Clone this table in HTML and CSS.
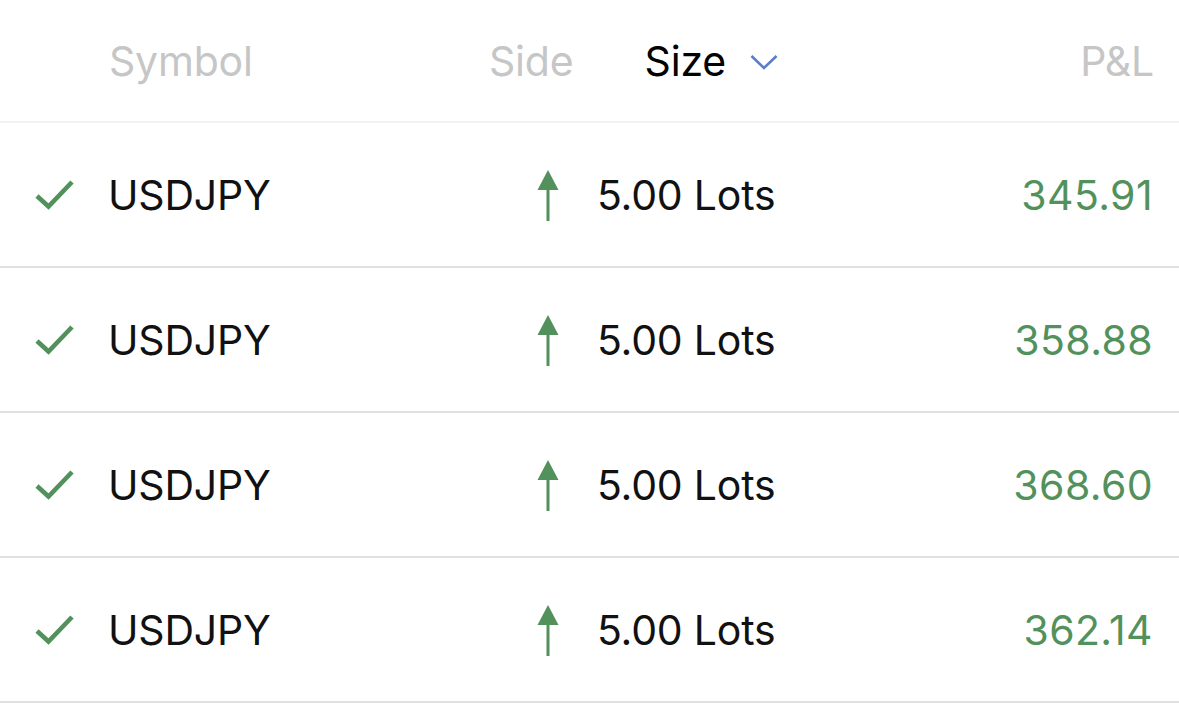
FILE: index.html
```html
<!DOCTYPE html>
<html lang="en">
<head>
    <meta charset="UTF-8" />
    <meta name="viewport" content="width=device-width, initial-scale=1.0" />
    <title>Positions</title>
    <link rel="stylesheet" href="styles.css">
</head>
<body>

<div class="positions">
    <!-- Column headers -->
    <div class="head">
        <div></div>
        <div class="h-symbol">Symbol</div>
        <div class="h-side">Side</div>
        <div class="h-size">
            Size
            <svg class="chevron" width="28" height="16" viewBox="0 0 28 16"><polyline points="1.5,2 14,14 26.5,2" fill="none" stroke="#5a7ec8" stroke-width="2.6"/></svg>
        </div>
        <div class="h-pnl">P&amp;L</div>
    </div>

    <div class="row">
        <div class="check"><svg width="40" height="30" viewBox="0 0 40 30"><polyline points="2,16 13.5,26.5 37,2" fill="none" stroke="#52915c" stroke-width="4.6"/></svg></div>
        <div class="symbol">USDJPY</div>
        <div class="side"><svg width="22" height="51" viewBox="0 0 22 51"><polygon points="11,0 0.5,20 21.5,20" fill="#52915c"/><rect x="9.5" y="18" width="3" height="33" fill="#52915c"/></svg></div>
        <div class="size">5.00 Lots</div>
        <div class="pnl">345.91</div>
    </div>
    <div class="row">
        <div class="check"><svg width="40" height="30" viewBox="0 0 40 30"><polyline points="2,16 13.5,26.5 37,2" fill="none" stroke="#52915c" stroke-width="4.6"/></svg></div>
        <div class="symbol">USDJPY</div>
        <div class="side"><svg width="22" height="51" viewBox="0 0 22 51"><polygon points="11,0 0.5,20 21.5,20" fill="#52915c"/><rect x="9.5" y="18" width="3" height="33" fill="#52915c"/></svg></div>
        <div class="size">5.00 Lots</div>
        <div class="pnl">358.88</div>
    </div>
    <div class="row">
        <div class="check"><svg width="40" height="30" viewBox="0 0 40 30"><polyline points="2,16 13.5,26.5 37,2" fill="none" stroke="#52915c" stroke-width="4.6"/></svg></div>
        <div class="symbol">USDJPY</div>
        <div class="side"><svg width="22" height="51" viewBox="0 0 22 51"><polygon points="11,0 0.5,20 21.5,20" fill="#52915c"/><rect x="9.5" y="18" width="3" height="33" fill="#52915c"/></svg></div>
        <div class="size">5.00 Lots</div>
        <div class="pnl">368.60</div>
    </div>
    <div class="row">
        <div class="check"><svg width="40" height="30" viewBox="0 0 40 30"><polyline points="2,16 13.5,26.5 37,2" fill="none" stroke="#52915c" stroke-width="4.6"/></svg></div>
        <div class="symbol">USDJPY</div>
        <div class="side"><svg width="22" height="51" viewBox="0 0 22 51"><polygon points="11,0 0.5,20 21.5,20" fill="#52915c"/><rect x="9.5" y="18" width="3" height="33" fill="#52915c"/></svg></div>
        <div class="size">5.00 Lots</div>
        <div class="pnl">362.14</div>
    </div>
</div>

</body>
</html>
```

FILE: styles.css
```css
body {
    margin: 0;
    background-color: #fff;
    font-family: Inter, "Noto Sans", sans-serif;
    font-size: 41px;
    letter-spacing: -0.2px;
    color: #111;
}
.positions {
    width: 1179px;
}
.head {
    display: grid;
    grid-template-columns: 109px 380px 83px 206px 1fr;
    align-items: center;
    height: 121px;
    padding-right: 25px;
    border-bottom: 2px solid #f2f2f2;
    color: #c6c6c6;
}
.h-size {
    display: flex;
    align-items: center;
    justify-content: flex-end;
    gap: 24px;
    color: #000;
}
.chevron {
    margin-top: 2px;
}
.h-pnl {
    text-align: right;
}
.row {
    display: grid;
    grid-template-columns: 73px 429px 60px 200px 1fr;
    align-items: center;
    height: 143px;
    padding: 0 26px 0 35px;
    border-bottom: 2px solid #e0e0e0;
}
.check svg,
.side svg {
    display: block;
}
.side svg {
    margin-top: 1px;
}
.pnl {
    text-align: right;
    letter-spacing: 0.4px;
    color: #52915c;
}
```
